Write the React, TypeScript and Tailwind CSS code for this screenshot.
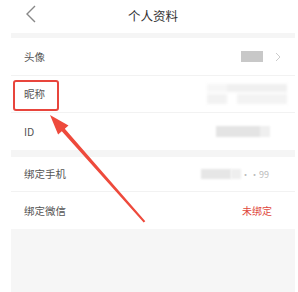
import React from "react";

const font = { fontFamily: '"Noto Sans CJK SC", "Noto Sans", sans-serif' };

const Row = ({
  label,
  children,
  border = true,
  h = "h-[37px]",
}: {
  label: string;
  children?: React.ReactNode;
  border?: boolean;
  h?: string;
}) => (
  <div
    className={`flex items-center justify-between pl-[13px] pr-[14px] ${h} ${
      border ? "border-b border-[#f2f2f2]" : ""
    }`}
  >
    <span className="text-[10.5px] text-[#555]">{label}</span>
    <div className="flex items-center">{children}</div>
  </div>
);

const App = () => {
  return (
    <div
      className="relative w-[298px] h-[292px] bg-white overflow-hidden"
      style={font}
    >
      {/* header */}
      <div className="relative flex items-center justify-center h-[33px]">
        <svg
          className="absolute left-[25px] top-[5px]"
          width="12"
          height="18"
          viewBox="0 0 12 18"
        >
          <path
            d="M10 1 L2 9 L10 17"
            fill="none"
            stroke="#888"
            strokeWidth="1.4"
          />
        </svg>
        <span className="text-[12.5px] text-[#333] ml-[8px]">个人资料</span>
      </div>

      <div className="ml-[11px] w-[284px]">
        <div className="h-[5px] bg-[#f5f5f5]" />
        <Row label="头像" h="h-[38px]">
          <div className="w-[22px] h-[11px] bg-[#c8c8c8]" />
          <svg className="ml-[12px]" width="6" height="10" viewBox="0 0 6 10">
            <path d="M1 1 L5 5 L1 9" fill="none" stroke="#ccc" strokeWidth="1" />
          </svg>
        </Row>
        <Row label="昵称">
          <div className="flex flex-col gap-[2px] mr-[-6px] blur-[1.5px]">
            <div className="flex">
              <div className="w-[20px] h-[8px] bg-[#f6f6f6]" />
              <div className="w-[60px] h-[8px] bg-[#f0f0f0]" />
            </div>
            <div className="flex">
              <div className="w-[20px] h-[10px] bg-[#f2f2f2]" />
              <div className="w-[10px] h-[10px] bg-white" />
              <div className="w-[50px] h-[10px] bg-[#f3f3f3]" />
            </div>
          </div>
        </Row>
        <Row label="ID" border={false}>
          <div className="flex mr-[11px] blur-[1px]">
            <div className="w-[44px] h-[11px] bg-[#e4e4e4]" />
            <div className="w-[10px] h-[11px] bg-[#efefef]" />
          </div>
        </Row>
        <div className="h-[7px] bg-[#f5f5f5]" />
        <Row label="绑定手机" h="h-[35px]">
          <div className="flex items-center mr-[12px]">
            <div className="w-[30px] h-[10px] bg-[#e6e6e6] blur-[1px]" />
            <div className="w-[10px] h-[10px] bg-[#eeeeee] blur-[1px]" />
            <span className="text-[9px] text-[#bbb] leading-none">··99</span>
          </div>
        </Row>
        <Row label="绑定微信" border={false}>
          <span className="text-[10px] text-[#e0463c] mr-[9px]">未绑定</span>
        </Row>
        <div className="h-[70px] bg-[#f6f6f6]" />
      </div>

      {/* annotation box */}
      <div className="absolute left-[13px] top-[80px] w-[46px] h-[31px] border-2 border-[#e8453c] rounded-[3px]" />

      {/* annotation arrow */}
      <svg
        className="absolute left-0 top-0"
        width="298"
        height="292"
        viewBox="0 0 298 292"
      >
        <polygon
          points="50,115 68.5,125.4 64.8,128.7 145.3,221.2 143.7,222.6 61.8,131.3 58.1,134.6"
          fill="#ee4a3c"
        />
      </svg>
    </div>
  );
};

export default App;
